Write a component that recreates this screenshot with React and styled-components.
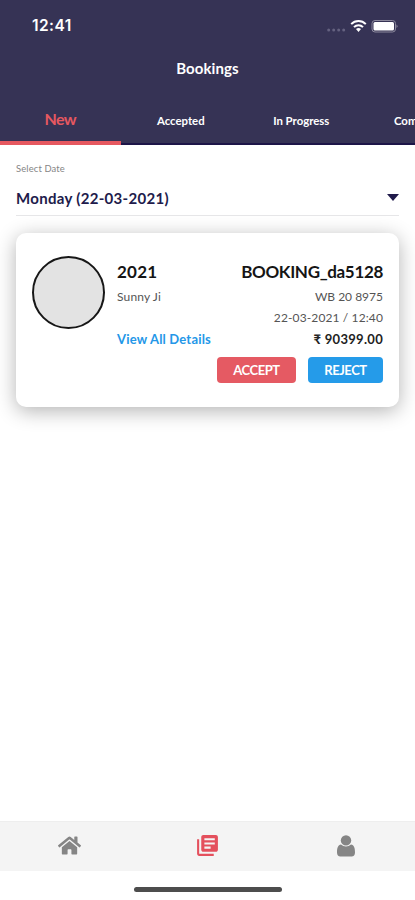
import React from "react";
import styled, { createGlobalStyle } from "styled-components";
import { FaHome } from "react-icons/fa";
import { MdLibraryBooks } from "react-icons/md";

const GlobalStyle = createGlobalStyle`
  * { box-sizing: border-box; }
  body { margin: 0; background: #fff; font-family: Lato, "Noto Sans", sans-serif; }
  button { font-family: inherit; }
`;

const Screen = styled.div`
  width: 415px;
  height: 900px;
  display: flex;
  flex-direction: column;
  overflow: hidden;
  background: #fff;
`;

const Header = styled.header`
  height: 145px;
  flex: none;
  background: #363355;
  color: #fff;
`;

const StatusBar = styled.div`
  height: 50px;
  padding: 1px 17px 0 32px;
  display: flex;
  align-items: center;
  justify-content: space-between;
`;

const Clock = styled.span`
  font: 600 15.5px/20px Inter, sans-serif;
  letter-spacing: 0.45px;
`;

const StatusIcons = styled.svg`
  width: 72px;
  height: 16px;
  display: block;
`;

const Title = styled.h1`
  margin: 0;
  height: 38px;
  font-size: 15px;
  line-height: 37px;
  font-weight: 700;
  text-align: center;
  letter-spacing: 0.1px;
`;

const Tabs = styled.nav`
  width: 480px;
  height: 57px;
  display: grid;
  grid-template-columns: repeat(4, 120.5px);
`;

const Tab = styled.button`
  border: 0;
  border-bottom: ${(p) => (p.$active ? "4px solid #e65860" : "2px solid #1d1548")};
  background: none;
  padding: ${(p) => (p.$active ? "7px 0 0" : "9px 0 0")};
  color: ${(p) => (p.$active ? "#e65860" : "#fff")};
  font-size: ${(p) => (p.$active ? "16px" : "11.4px")};
  font-weight: 700;
  letter-spacing: ${(p) => (p.$active ? "-0.7px" : "0")};
`;

const Main = styled.main`
  flex: 1;
  padding: 16px 16px 0;
`;

const DatePicker = styled.section`
  height: 55px;
  border-bottom: 1px solid #e6e6e8;
`;

const Label = styled.div`
  font-size: 9.4px;
  line-height: 15px;
  letter-spacing: 0.15px;
  color: #858585;
`;

const DateRow = styled.div`
  height: 43px;
  display: flex;
  align-items: center;
  justify-content: space-between;
  color: #211b4b;
  font-size: 15px;
  font-weight: 700;
`;

const DateValue = styled.span`
  letter-spacing: 0.3px;
`;

const Caret = styled.svg`
  width: 12px;
  height: 7px;
`;

const Card = styled.article`
  width: 383px;
  height: 174px;
  margin-top: 17px;
  padding: 23px 16px 0 16px;
  border-radius: 10px;
  background: #fff;
  box-shadow: 0 4px 20px rgba(0, 0, 0, 0.3);
  display: flex;
`;

const Avatar = styled.div`
  width: 73px;
  height: 73px;
  flex: none;
  border: 2px solid #171717;
  border-radius: 50%;
  background: #e3e3e3;
`;

const Info = styled.div`
  flex: 1;
  margin-left: 12px;
`;

const InfoRow = styled.div`
  height: ${(p) => p.$height}px;
  display: flex;
  align-items: center;
  justify-content: space-between;
  white-space: nowrap;
`;

const Strong = styled.span`
  color: #151515;
  font-size: 17px;
  font-weight: 700;
  letter-spacing: ${(p) => p.$spacing || 0}px;
`;

const Detail = styled.span`
  color: #555;
  font-size: 12px;
  letter-spacing: ${(p) => p.$spacing || 0}px;
`;

const Price = styled.span`
  color: #222;
  font-size: 13px;
  font-weight: 700;
  letter-spacing: 0.3px;
`;

const DetailsLink = styled.a`
  color: #2497e8;
  font-size: 13px;
  font-weight: 700;
  letter-spacing: 0.18px;
`;

const Actions = styled.div`
  display: flex;
  justify-content: flex-end;
  gap: 12px;
  padding-top: 8px;
`;

const Action = styled.button`
  width: ${(p) => p.$width}px;
  height: 26px;
  padding: 0;
  border: 0;
  border-radius: 4px;
  background: ${(p) => p.$color};
  color: #fff;
  font-size: 13px;
  font-weight: 700;
  letter-spacing: -0.45px;
`;

const BottomNav = styled.nav`
  height: 50px;
  flex: none;
  display: grid;
  grid-template-columns: repeat(3, 1fr);
  background: #f4f4f4;
  border-top: 1px solid #eeeeee;
`;

const NavItem = styled.button`
  display: flex;
  align-items: center;
  justify-content: center;
  padding: 0 0 2px;
  border: 0;
  background: none;
  color: ${(p) => (p.$active ? "#e4505d" : "#858585")};
`;

const HomeArea = styled.footer`
  height: 29px;
  flex: none;
  display: flex;
  justify-content: center;
  padding-top: 16px;
`;

const HomeIndicator = styled.div`
  width: 148px;
  height: 5px;
  border-radius: 3px;
  background: #4d4d4d;
`;

function PhoneStatus() {
  return (
    <StatusIcons viewBox="0 0 72 16">
      <g fill="#656280">
        <circle cx="2.7" cy="12" r="1.5" />
        <circle cx="7.7" cy="12" r="1.5" />
        <circle cx="12.7" cy="12" r="1.5" />
        <circle cx="17.7" cy="12" r="1.5" />
      </g>
      <g fill="none" stroke="#fff" strokeWidth="2">
        <path d="M25.2 6.1a10.2 10.2 0 0 1 14.6 0" />
        <path d="M28 9.1a6.3 6.3 0 0 1 9 0" />
      </g>
      <path d="M30 11.1a3.8 3.8 0 0 1 5 0l-2.5 2.8z" fill="#fff" />
      <rect x="46" y="2.5" width="23.5" height="11.5" rx="3" fill="none" stroke="#8c899d" />
      <rect x="47.5" y="4" width="20.5" height="8.5" rx="1.5" fill="#fff" />
      <path d="M70.5 6.5q2 1.7 0 3.5z" fill="#8c899d" />
    </StatusIcons>
  );
}

function PersonIcon() {
  return (
    <svg width="20" height="22" viewBox="0 0 20 22" fill="currentColor">
      <circle cx="10" cy="5.4" r="5.2" />
      <path d="M5 9.6C2 10.2 1 13 1 17.4C1 20.2 2.3 21.5 4.4 21.5H15.6C17.7 21.5 19 20.2 19 17.4C19 13 18 10.2 15 9.6C12.2 12.2 7.8 12.2 5 9.6Z" />
    </svg>
  );
}

export default function App() {
  return (
    <>
      <GlobalStyle />
      <Screen>
        <Header>
          <StatusBar>
            <Clock>12:41</Clock>
            <PhoneStatus />
          </StatusBar>
          <Title>Bookings</Title>
          <Tabs>
            <Tab $active>New</Tab>
            <Tab>Accepted</Tab>
            <Tab>In Progress</Tab>
            <Tab>Completed</Tab>
          </Tabs>
        </Header>
        <Main>
          <DatePicker>
            <Label>Select Date</Label>
            <DateRow>
              <DateValue>Monday (22-03-2021)</DateValue>
              <Caret viewBox="0 0 12 7"><path d="M0 0H12L6 7Z" fill="#211b4b" /></Caret>
            </DateRow>
          </DatePicker>
          <Card>
            <Avatar />
            <Info>
              <InfoRow $height={31}>
                <Strong $spacing={0.25}>2021</Strong>
                <Strong $spacing={-0.33}>BOOKING_da5128</Strong>
              </InfoRow>
              <InfoRow $height={18}>
                <Detail $spacing={0.15}>Sunny Ji</Detail>
                <Detail>WB 20 8975</Detail>
              </InfoRow>
              <InfoRow $height={24}>
                <span />
                <Detail $spacing={0.12}>22-03-2021 / 12:40</Detail>
              </InfoRow>
              <InfoRow $height={20}>
                <DetailsLink>View All Details</DetailsLink>
                <Price>₹ 90399.00</Price>
              </InfoRow>
              <Actions>
                <Action $width={79} $color="#e55a63">ACCEPT</Action>
                <Action $width={75} $color="#259be9">REJECT</Action>
              </Actions>
            </Info>
          </Card>
        </Main>
        <BottomNav>
          <NavItem aria-label="Home"><FaHome size={23} /></NavItem>
          <NavItem $active aria-label="Bookings"><MdLibraryBooks size={25} /></NavItem>
          <NavItem aria-label="Profile"><PersonIcon /></NavItem>
        </BottomNav>
        <HomeArea><HomeIndicator /></HomeArea>
      </Screen>
    </>
  );
}
